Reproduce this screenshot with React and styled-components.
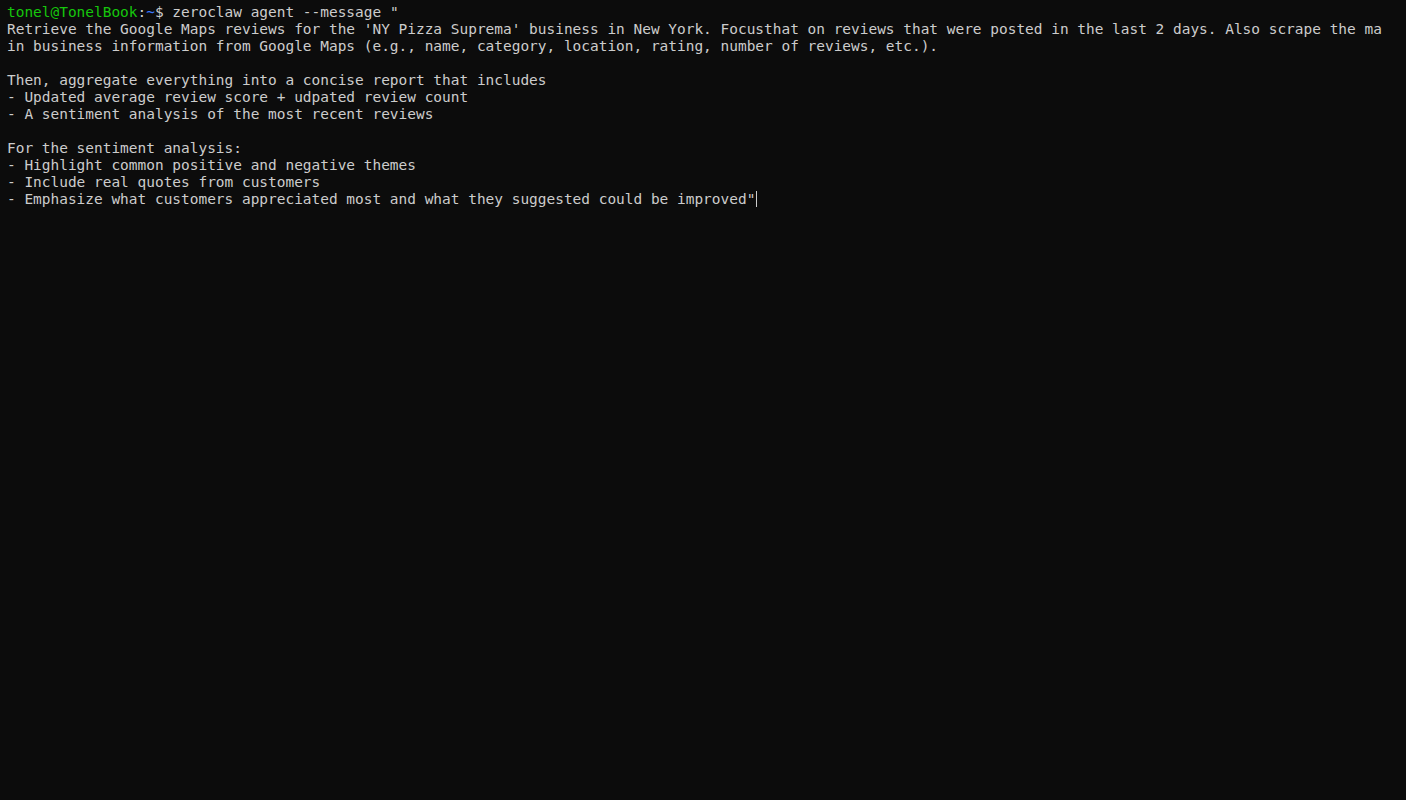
import React from 'react';
import styled, { createGlobalStyle } from 'styled-components';

const GlobalStyle = createGlobalStyle`
  html, body {
    margin: 0;
    padding: 0;
    background: #0c0c0c;
  }
`;

const Terminal = styled.div`
  width: 1406px;
  height: 800px;
  background: #0c0c0c;
  box-sizing: border-box;
  padding: 4px 0 0 7px;
  overflow: hidden;
  font-family: "DejaVu Sans Mono", "Liberation Mono", monospace;
  font-size: 14.46px;
  line-height: 17px;
  color: #cccccc;
`;

const Line = styled.div`
  white-space: pre;
  height: 17px;
`;

const User = styled.span`
  color: #16c60c;
`;

const Path = styled.span`
  color: #3b78ff;
`;

const Cursor = styled.span`
  display: inline-block;
  width: 1px;
  height: 16px;
  background: #cccccc;
  vertical-align: -3px;
  margin-left: 1px;
`;

const lines = [
  "Retrieve the Google Maps reviews for the 'NY Pizza Suprema' business in New York. Focusthat on reviews that were posted in the last 2 days. Also scrape the ma",
  'in business information from Google Maps (e.g., name, category, location, rating, number of reviews, etc.).',
  '',
  'Then, aggregate everything into a concise report that includes',
  '- Updated average review score + udpated review count',
  '- A sentiment analysis of the most recent reviews',
  '',
  'For the sentiment analysis:',
  '- Highlight common positive and negative themes',
  '- Include real quotes from customers',
];

export default function App() {
  return (
    <>
      <GlobalStyle />
      <Terminal>
        <Line>
          <User>tonel@TonelBook</User>:<Path>~</Path>$ zeroclaw agent --message "
        </Line>
        {lines.map((l, i) => (
          <Line key={i}>{l}</Line>
        ))}
        <Line>
          - Emphasize what customers appreciated most and what they suggested could be improved"
          <Cursor />
        </Line>
      </Terminal>
    </>
  );
}
